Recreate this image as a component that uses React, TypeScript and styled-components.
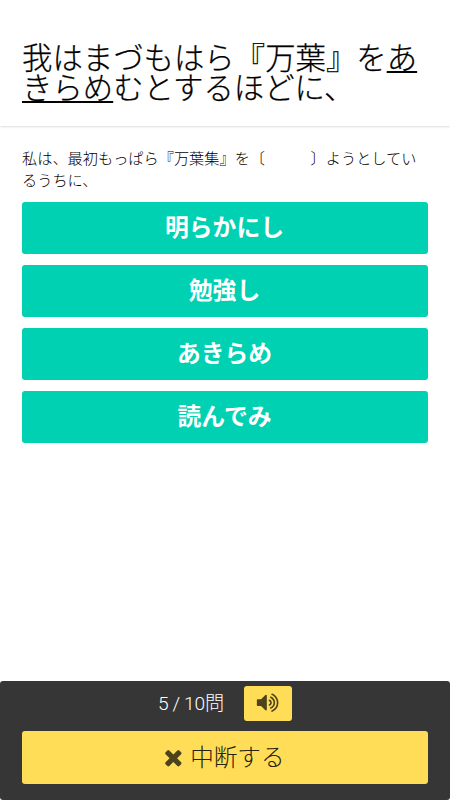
import React from "react";
import styled, { createGlobalStyle } from "styled-components";

const Global = createGlobalStyle`
  * { box-sizing: border-box; }
  body { margin: 0; background: #fff; font-family: "Noto Sans CJK JP", sans-serif; }
  button { font-family: inherit; border: 0; padding: 0; margin: 0; }
`;
const Page = styled.main`
  height: 800px;
  display: flex;
  flex-direction: column;
  overflow: hidden;
`;
const Header = styled.header`
  height: 126px;
  padding: 41px 22px 0;
  box-shadow: 0 1px 2px rgba(10, 10, 10, 0.14);
`;
const Title = styled.h1`
  margin: 0;
  font-weight: 300;
  font-size: 30.4px;
  line-height: 30px;
  color: #000;
  white-space: nowrap;
  -webkit-text-stroke: 0.25px #000;
`;
const Under = styled.span`
  text-decoration: underline;
  text-decoration-thickness: 2px;
  text-underline-offset: 2px;
  text-decoration-skip-ink: none;
`;
const Body = styled.section`
  flex: 1;
  padding: 20px 22px 0;
`;
const Question = styled.p`
  margin: 0 0 12.3px;
  font-size: 15.2px;
  font-weight: 300;
  line-height: 22px;
  color: #000;
  white-space: nowrap;
`;
const Choices = styled.div`
  display: grid;
  gap: 11px;
`;
const Choice = styled.button`
  height: 52px;
  border-radius: 3px;
  background: #00d1b2;
  color: #fff;
  font-size: 23.8px;
  font-weight: 700;
  line-height: 46px;
  padding: 0 1px 5px 0;
`;
const Footer = styled.footer`
  height: 119px;
  padding: 5px 22px 0;
  background: #363636;
  border-radius: 3px;
`;
const Status = styled.div`
  height: 35px;
  display: flex;
  justify-content: center;
  align-items: center;
  gap: 20px;
  color: #fff;
  font-family: "Roboto", "Noto Sans CJK JP", sans-serif;
  font-weight: 300;
`;
const Count = styled.span`
  width: 66px;
  line-height: 35px;
  white-space: nowrap;
  word-spacing: -0.4px;
  letter-spacing: -0.2px;
  font-size: 19.2px;
`;
const Sound = styled.button`
  width: 48px;
  height: 35px;
  display: grid;
  place-items: center;
  border-radius: 3px;
  background: #ffdd57;
`;
const Stop = styled.button`
  width: 100%;
  height: 53px;
  margin-top: 10px;
  padding-right: 4px;
  display: flex;
  align-items: center;
  justify-content: center;
  gap: 4px;
  border-radius: 3px;
  background: #ffdd57;
  color: #27220d;
  font-size: 23.6px;
  font-weight: 300;
`;
const StopLabel = styled.span`
  padding-bottom: 4px;
`;
const Glyph = styled.svg<{ $size: number }>`
  width: ${(p) => p.$size}px;
  height: ${(p) => p.$size}px;
  margin-bottom: 1px;
  fill: #4d431a;
`;

const VolumeIcon = () => (
  <Glyph $size={23.3} viewBox="0 0 1792 1792">
    <path d="M832 352v1088q0 26-19 45t-45 19-45-19l-333-333h-262q-26 0-45-19t-19-45v-384q0-26 19-45t45-19h262l333-333q19-19 45-19t45 19 19 45zm384 544q0 76-42.5 141.5t-112.5 93.5q-10 5-25 5-26 0-45-18.5t-19-45.5q0-21 12-35.5t29-25 34-23 29-36 12-56.5-12-56.5-29-36-34-23-29-25-12-35.5q0-27 19-45.5t45-18.5q15 0 25 5 70 27 112.5 93t42.5 142zm256 0q0 153-85 282.5t-225 188.5q-13 5-25 5-27 0-46-19t-19-45q0-39 39-59 56-29 76-44 74-54 115.5-135.5t41.5-173.5-41.5-173.5-115.5-135.5q-20-15-76-44-39-20-39-59 0-26 19-45t45-19q13 0 26 5 140 59 225 188.5t85 282.5zm256 0q0 230-127 422.5t-338 283.5q-13 5-26 5-26 0-45-19t-19-45q0-36 39-59 7-4 22.5-10.5t22.5-10.5q46-25 82-51 123-91 192-227t69-289-69-289-192-227q-36-26-82-51-7-4-22.5-10.5t-22.5-10.5q-39-23-39-59 0-26 19-45t45-19q13 0 26 5 211 91 338 283.5t127 422.5z" />
  </Glyph>
);

const CrossIcon = () => (
  <Glyph $size={24.7} viewBox="0 0 1792 1792">
    <path d="M1490 1322q0 40-28 68l-136 136q-28 28-68 28t-68-28l-294-294-294 294q-28 28-68 28t-68-28l-136-136q-28-28-28-68t28-68l294-294-294-294q-28-28-28-68t28-68l136-136q28-28 68-28t68 28l294 294 294-294q28-28 68-28t68 28l136 136q28 28 28 68t-28 68l-294 294 294 294q28 28 28 68z" />
  </Glyph>
);

const choices = ["明らかにし", "勉強し", "あきらめ", "読んでみ"];

export default function App() {
  return (
    <Page>
      <Global />
      <Header>
        <Title>
          我はまづもはら『万葉』を<Under>あ<br />きらめ</Under>むとするほどに、
        </Title>
      </Header>
      <Body>
        <Question>
          私は、最初もっぱら『万葉集』を〔　　　〕ようとしてい<br />るうちに、
        </Question>
        <Choices>
          {choices.map((c) => <Choice key={c}>{c}</Choice>)}
        </Choices>
      </Body>
      <Footer>
        <Status>
          <Count>5 / 10問</Count>
          <Sound aria-label="音声"><VolumeIcon /></Sound>
        </Status>
        <Stop><CrossIcon /><StopLabel>中断する</StopLabel></Stop>
      </Footer>
    </Page>
  );
}
